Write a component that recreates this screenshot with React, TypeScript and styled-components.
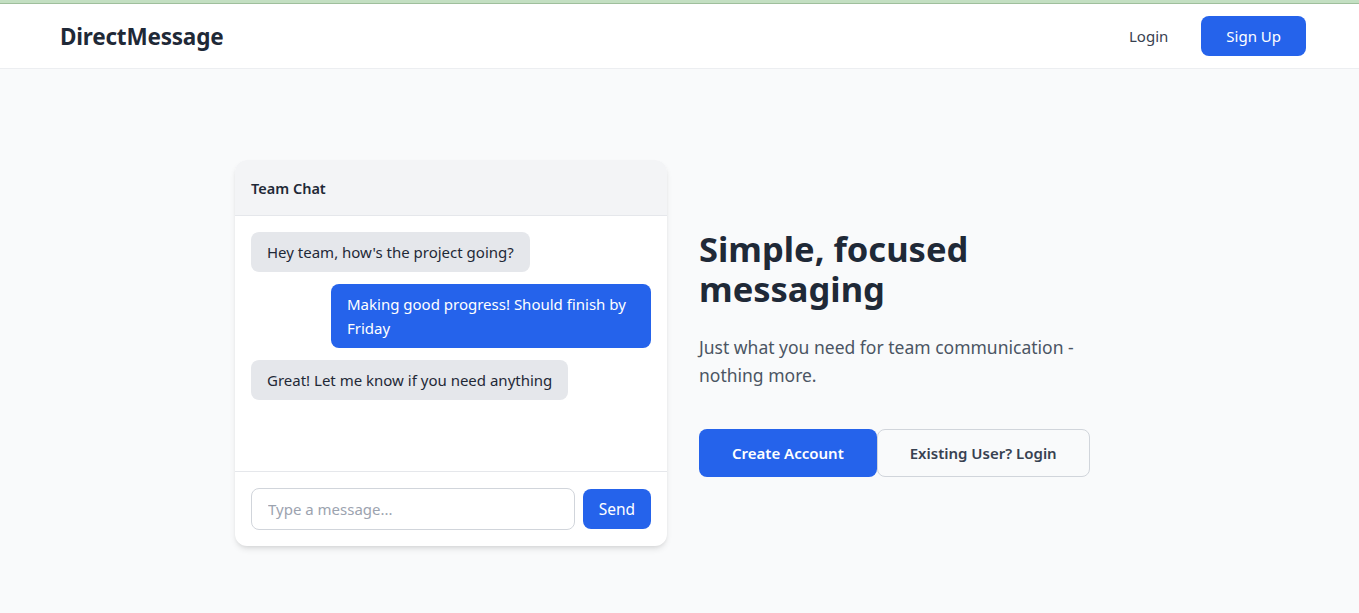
import styled, { createGlobalStyle } from "styled-components";

const GlobalStyle = createGlobalStyle`
  html, body {
    margin: 0;
    padding: 0;
    background: #f9fafb;
    font-family: "Noto Sans", "Open Sans", sans-serif;
    color: #1f2937;
  }
  * { box-sizing: border-box; }
`;

const Page = styled.div`
  min-height: 613px;
  border-top: 3px solid #c3dfc2;
  background: #f9fafb;
`;

const NavBar = styled.header`
  height: 66px;
  background: #fff;
  border-top: 1px solid #9fbf9c;
  border-bottom: 1px solid #eceef1;
  display: flex;
  align-items: center;
  justify-content: space-between;
  padding: 0 53px 0 60px;
`;

const Logo = styled.div`
  font-size: 22.5px;
  font-weight: 700;
  color: #1f2937;
  letter-spacing: -0.2px;
`;

const NavActions = styled.nav`
  display: flex;
  align-items: center;
  gap: 16px;
`;

const Button = styled.button<{ $variant: "primary" | "ghost" | "outline"; $size?: "sm" | "lg" }>`
  font-family: inherit;
  font-size: 15px;
  font-weight: ${({ $size }) => ($size === "lg" ? 600 : 400)};
  border-radius: 8px;
  cursor: pointer;
  height: ${({ $size }) => ($size === "lg" ? "48px" : "40px")};
  padding: ${({ $size }) => ($size === "lg" ? "0 32px" : "0 24px")};
  border: 1px solid transparent;
  ${({ $variant }) =>
    $variant === "primary"
      ? "background: #2563eb; color: #fff;"
      : $variant === "outline"
      ? "background: #f9fafb; color: #374151; border-color: #d1d5db;"
      : "background: transparent; color: #374151; padding: 0 16px;"}
`;

const Main = styled.main`
  width: 889px;
  margin: 0 auto;
  padding-top: 91px;
  display: grid;
  grid-template-columns: 432px 1fr;
  gap: 32px;
  align-items: center;
`;

const ChatCard = styled.section`
  background: #fff;
  border-radius: 12px;
  box-shadow: 0 4px 6px -1px rgba(0, 0, 0, 0.1), 0 2px 4px -2px rgba(0, 0, 0, 0.1);
  overflow: hidden;
`;

const ChatHeader = styled.div`
  height: 56px;
  background: #f3f4f6;
  border-bottom: 1px solid #e5e7eb;
  padding: 0 16px;
  display: flex;
  align-items: center;
  font-size: 14.5px;
  font-weight: 600;
  color: #1f2937;
`;

const Messages = styled.div`
  height: 256px;
  padding: 16px;
  display: flex;
  flex-direction: column;
  gap: 12px;
  border-bottom: 1px solid #e5e7eb;
`;

const Bubble = styled.div<{ $mine?: boolean }>`
  max-width: 80%;
  align-self: ${({ $mine }) => ($mine ? "flex-end" : "flex-start")};
  background: ${({ $mine }) => ($mine ? "#2563eb" : "#e5e7eb")};
  color: ${({ $mine }) => ($mine ? "#fff" : "#1f2937")};
  padding: 8px 16px;
  border-radius: 8px;
  font-size: 15px;
  line-height: 24px;
`;

const Composer = styled.form`
  padding: 16px;
  display: flex;
  gap: 8px;
  align-items: center;
`;

const Input = styled.input`
  flex: 1;
  height: 42px;
  border: 1px solid #d1d5db;
  border-radius: 8px;
  padding: 0 16px;
  font-family: inherit;
  font-size: 15px;
  color: #1f2937;
  &::placeholder { color: #9ca3af; }
`;

const SendButton = styled.button`
  height: 40px;
  padding: 0 16px;
  border: none;
  border-radius: 8px;
  background: #2563eb;
  color: #fff;
  font-family: inherit;
  font-size: 15.5px;
`;

const Hero = styled.div`
  display: flex;
  flex-direction: column;
`;

const Title = styled.h1`
  margin: 0 0 24px;
  font-size: 34.5px;
  line-height: 40px;
  font-weight: 700;
  color: #1f2937;
`;

const Lead = styled.p`
  margin: 0 0 40px;
  font-size: 17.5px;
  line-height: 28px;
  color: #4b5563;
`;

const Actions = styled.div`
  display: flex;
`;

export default function App() {
  return (
    <Page>
      <GlobalStyle />
      <NavBar>
        <Logo>DirectMessage</Logo>
        <NavActions>
          <Button $variant="ghost">Login</Button>
          <Button $variant="primary">Sign Up</Button>
        </NavActions>
      </NavBar>
      <Main>
        <ChatCard>
          <ChatHeader>Team Chat</ChatHeader>
          <Messages>
            <Bubble>Hey team, how's the project going?</Bubble>
            <Bubble $mine>Making good progress! Should finish by Friday</Bubble>
            <Bubble>Great! Let me know if you need anything</Bubble>
          </Messages>
          <Composer onSubmit={(e) => e.preventDefault()}>
            <Input placeholder="Type a message..." />
            <SendButton>Send</SendButton>
          </Composer>
        </ChatCard>
        <Hero>
          <Title>Simple, focused messaging</Title>
          <Lead>Just what you need for team communication - nothing more.</Lead>
          <Actions>
            <Button $variant="primary" $size="lg">Create Account</Button>
            <Button $variant="outline" $size="lg">Existing User? Login</Button>
          </Actions>
        </Hero>
      </Main>
    </Page>
  );
}
